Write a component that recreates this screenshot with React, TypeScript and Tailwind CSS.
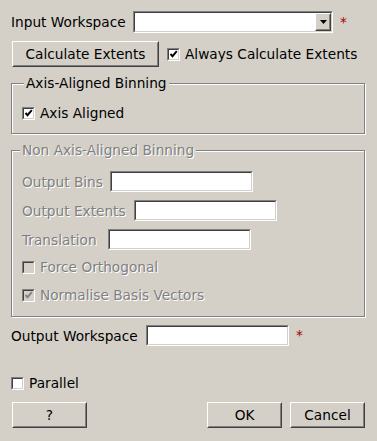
import React from "react";

const BG = "bg-[#d4d0c8]";

function Sunken({ className = "", fill = "bg-white", children }: { className?: string; fill?: string; children?: React.ReactNode }) {
  return (
    <div className={`border border-t-[#808080] border-l-[#808080] border-r-white border-b-white ${className}`}>
      <div className={`w-full h-full border border-t-[#404040] border-l-[#404040] border-r-[#d4d0c8] border-b-[#d4d0c8] ${fill} flex`}>
        {children}
      </div>
    </div>
  );
}

function Raised({ className = "", children }: { className?: string; children?: React.ReactNode }) {
  return (
    <div className={`border border-t-white border-l-white border-r-[#404040] border-b-[#404040] ${className}`}>
      <div className="w-full h-full border border-t-[#d4d0c8] border-l-[#d4d0c8] border-r-[#808080] border-b-[#808080] bg-[#d4d0c8] flex items-center justify-center">
        {children}
      </div>
    </div>
  );
}

function Check({ checked, disabled, label }: { checked: boolean; disabled?: boolean; label: string }) {
  return (
    <div className="flex items-center h-[20px]">
      <Sunken className="w-[13px] h-[13px]" fill={disabled ? "bg-[#d4d0c8]" : "bg-white"}>
        {checked && (
          <svg width="9" height="9" viewBox="0 0 9 9" className="m-auto">
            <path d="M1.5 4 L3.5 6.2 L7.8 1.2" fill="none" stroke={disabled ? "#808080" : "#000"} strokeWidth="1.9" />
          </svg>
        )}
      </Sunken>
      <span className={`ml-[5px] ${disabled ? "text-[#808080] [text-shadow:1px_1px_0_#fff]" : "text-black"}`}>{label}</span>
    </div>
  );
}

function Field({ label, labelW, disabled }: { label: string; labelW: string; disabled?: boolean }) {
  return (
    <div className="flex items-center h-[21px]">
      <span className={`${labelW} shrink-0 ${disabled ? "text-[#808080] [text-shadow:1px_1px_0_#fff]" : "text-black"}`}>{label}</span>
      <Sunken className="w-[143px] h-[21px]" />
    </div>
  );
}

export default function App() {
  return (
    <div
      className={`w-[377px] h-[441px] ${BG} text-[13.7px] leading-[16px] text-black pt-[11px] pl-[11px] pr-[12px] overflow-hidden`}
      style={{ fontFamily: '"DejaVu Sans", "Liberation Sans", sans-serif' }}
    >
      {/* Input workspace */}
      <div className="flex items-center h-[22px]">
        <span className="w-[122px] shrink-0">Input Workspace</span>
        <Sunken className="w-[200px] h-[22px]">
          <div className="flex-1" />
          <Raised className="w-[16px] h-full">
            <svg width="7" height="4" viewBox="0 0 7 4">
              <path d="M0 0 H7 L3.5 4 Z" fill="#000" />
            </svg>
          </Raised>
        </Sunken>
        <span className="ml-[7px] text-[#a00000] self-start mt-[3px]">*</span>
      </div>

      {/* Calculate extents */}
      <div className="flex items-center h-[26px] mt-[8px]">
        <Raised className="ml-[1px] w-[147px] h-[26px]">Calculate Extents</Raised>
        <div className="ml-[8px]">
          <Check checked label="Always Calculate Extents" />
        </div>
      </div>

      {/* Axis aligned group */}
      <div className="relative mt-[16px] w-[354px] h-[51px] border border-[#808080] shadow-[inset_1px_1px_0_#fff,1px_1px_0_#fff] pl-[10px] pt-[19px]">
        <span className={`absolute left-[12px] top-[-9px] ${BG} px-[2px]`}>Axis-Aligned Binning</span>
        <Check checked label="Axis Aligned" />
      </div>

      {/* Non axis aligned group */}
      <div className="relative mt-[16px] w-[354px] h-[167px] border border-[#808080] shadow-[inset_1px_1px_0_#fff,1px_1px_0_#fff] pl-[10px] pt-[20px] flex flex-col">
        <span className={`absolute left-[8px] top-[-9px] ${BG} px-[2px] text-[#808080] [text-shadow:1px_1px_0_#fff]`}>
          Non Axis-Aligned Binning
        </span>
        <Field label="Output Bins" labelW="w-[88px]" disabled />
        <div className="mt-[8px]">
          <Field label="Output Extents" labelW="w-[112px]" disabled />
        </div>
        <div className="mt-[8px]">
          <Field label="Translation" labelW="w-[86px]" disabled />
        </div>
        <div className="mt-[7px]">
          <Check checked={false} disabled label="Force Orthogonal" />
        </div>
        <div className="mt-[8px]">
          <Check checked disabled label="Normalise Basis Vectors" />
        </div>
      </div>

      {/* Output workspace */}
      <div className="flex items-center h-[21px] mt-[8px]">
        <span className="w-[135px] shrink-0">Output Workspace</span>
        <Sunken className="w-[143px] h-[21px]" />
        <span className="ml-[7px] text-[#a00000] self-start mt-[2px]">*</span>
      </div>

      {/* Parallel */}
      <div className="mt-[27px]">
        <Check checked={false} label="Parallel" />
      </div>

      {/* Buttons */}
      <div className="flex items-center h-[26px] mt-[9px] pl-[1px]">
        <Raised className="w-[75px] h-[26px]">?</Raised>
        <div className="flex-1" />
        <Raised className="w-[75px] h-[26px]">OK</Raised>
        <Raised className="ml-[8px] w-[75px] h-[26px]">Cancel</Raised>
      </div>
    </div>
  );
}
